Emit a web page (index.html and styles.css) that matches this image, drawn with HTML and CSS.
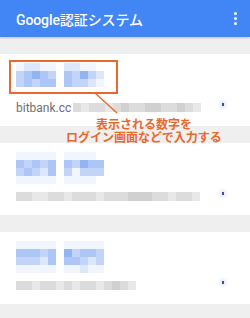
FILE: index.html
```html
<!DOCTYPE html>
<html lang="ja">
<head>
    <meta charset="UTF-8">
    <meta name="viewport" content="width=device-width, initial-scale=1.0">
    <title>Google認証システム</title>
    <link rel="stylesheet" href="styles.css">
</head>
<body>
    <header class="appbar">
        <h1 class="title">Google認証システム</h1>
        <div class="menu"><span></span><span></span><span></span></div>
    </header>

    <main class="list">
        <section class="card">
            <div class="mosaic">
                <i class="s1"></i><i class="s2"></i><i class="s2"></i><i class="s1"></i><i class="s1"></i><i></i><i class="s2"></i><i class="s2"></i><i class="s1"></i><i class="s1"></i><i></i>
                <i class="s3"></i><i class="s4"></i><i class="s5"></i><i class="s4"></i><i class="s3"></i><i></i><i class="s4"></i><i class="s3"></i><i class="s5"></i><i class="s3"></i><i class="s2"></i>
                <i class="s3"></i><i class="s4"></i><i class="s3"></i><i class="s4"></i><i class="s4"></i><i></i><i class="s4"></i><i class="s3"></i><i class="s3"></i><i class="s2"></i><i class="s1"></i>
            </div>
            <div class="meta">
                <span class="label">bitbank.cc</span>
                <div class="bar">
                    <i class="g2"></i><i class="g1"></i><i class="g2"></i><i class="g2"></i><i class="g1"></i><i class="g2"></i><i class="g3"></i><i class="g2"></i><i class="g2"></i><i class="g3"></i><i class="g3"></i><i class="g2"></i><i class="g2"></i><i class="g3"></i><i class="g2"></i><i class="g1"></i>
                </div>
                <span class="tick"></span>
            </div>
        </section>

        <section class="card">
            <div class="mosaic">
                <i class="s1"></i><i class="s1"></i><i class="s1"></i><i class="s1"></i><i class="s1"></i><i></i><i class="s1"></i><i class="s1"></i><i class="s1"></i><i class="s1"></i><i></i>
                <i class="s4"></i><i class="s3"></i><i class="s4"></i><i class="s3"></i><i class="s4"></i><i></i><i class="s4"></i><i class="s3"></i><i class="s5"></i><i class="s4"></i><i class="s4"></i>
                <i class="s3"></i><i class="s4"></i><i class="s3"></i><i class="s2"></i><i class="s4"></i><i></i><i class="s3"></i><i class="s1"></i><i class="s3"></i><i class="s3"></i><i class="s3"></i>
                <i class="s1"></i><i class="s1"></i><i class="s1"></i><i class="s1"></i><i class="s1"></i><i></i><i class="s1"></i><i class="s1"></i><i class="s1"></i><i class="s1"></i><i></i>
            </div>
            <div class="meta">
                <div class="bar">
                    <i class="g2"></i><i class="g2"></i><i class="g1"></i><i class="g1"></i><i class="g2"></i><i class="g2"></i><i class="g1"></i><i class="g2"></i><i class="g2"></i><i class="g2"></i><i class="g1"></i><i class="g2"></i><i class="g2"></i><i class="g2"></i><i class="g3"></i><i class="g3"></i><i class="g3"></i><i class="g2"></i><i class="g2"></i><i class="g1"></i><i class="g2"></i><i class="g2"></i><i class="g1"></i>
                </div>
                <span class="tick"></span>
            </div>
        </section>

        <section class="card">
            <div class="mosaic">
                <i class="s1"></i><i class="s1"></i><i class="s1"></i><i class="s1"></i><i class="s1"></i><i></i><i class="s1"></i><i class="s1"></i><i class="s1"></i><i class="s1"></i><i class="s1"></i>
                <i class="s4"></i><i class="s4"></i><i class="s4"></i><i class="s3"></i><i class="s4"></i><i></i><i class="s5"></i><i class="s3"></i><i class="s4"></i><i class="s4"></i><i class="s3"></i>
                <i class="s3"></i><i class="s3"></i><i class="s3"></i><i class="s2"></i><i class="s4"></i><i></i><i class="s4"></i><i class="s4"></i><i class="s3"></i><i class="s2"></i><i class="s3"></i>
                <i class="s1"></i><i class="s1"></i><i class="s1"></i><i class="s1"></i><i class="s1"></i><i></i><i class="s1"></i><i class="s1"></i><i class="s2"></i><i class="s1"></i><i class="s1"></i>
            </div>
            <div class="meta">
                <div class="bar">
                    <i class="g2"></i><i class="g2"></i><i class="g1"></i><i class="g2"></i><i class="g2"></i><i class="g1"></i><i class="g2"></i><i class="g1"></i><i class="g2"></i><i class="g2"></i><i class="g1"></i><i class="g2"></i><i class="g3"></i><i class="g2"></i><i class="g1"></i>
                </div>
                <span class="tick"></span>
            </div>
        </section>
    </main>

    <!-- annotation drawn on top of the screenshot -->
    <div class="callout-box"></div>
    <svg class="callout-line" width="250" height="318" viewBox="0 0 250 318">
        <line x1="95" y1="93" x2="117" y2="113" stroke="#e8692c" stroke-width="1.4"/>
    </svg>
    <p class="callout-text">表示される数字を<br>ログイン画面などで入力する</p>
</body>
</html>
```

FILE: styles.css
```css
body {
    margin: 0;
    position: relative;
    width: 250px;
    height: 318px;
    overflow: hidden;
    background-color: #efefef;
    font-family: Roboto, "Noto Sans CJK JP", sans-serif;
}

.appbar {
    display: flex;
    align-items: center;
    justify-content: space-between;
    height: 37px;
    padding: 0 13px 0 16px;
    box-sizing: border-box;
    background-color: #4285f4;
    box-shadow: 0 1px 2px rgba(0, 0, 0, 0.18);
    color: white;
}

.title {
    margin: 0;
    font-size: 14px;
    font-weight: 500;
    letter-spacing: -0.1px;
}

.menu {
    display: flex;
    flex-direction: column;
    gap: 2px;
}

.menu span {
    width: 3px;
    height: 3px;
    border-radius: 50%;
    background-color: white;
}

.list {
    display: flex;
    flex-direction: column;
    gap: 17px;
    padding-top: 17px;
}

.card {
    height: 72px;
    box-sizing: border-box;
    padding: 9px 0 0 16px;
    background-color: white;
}

.mosaic {
    display: grid;
    grid-template-columns: repeat(11, 8px);
    grid-auto-rows: 8px;
    height: 32px;
}

.mosaic i { background-color: white; }
.mosaic .s1 { background-color: #f1f5fe; }
.mosaic .s2 { background-color: #dce7fb; }
.mosaic .s3 { background-color: #c2d5f8; }
.mosaic .s4 { background-color: #adc6f5; }
.mosaic .s5 { background-color: #93b4f2; }

.meta {
    display: flex;
    align-items: flex-start;
    margin-top: 8px;
    height: 10px;
}

.label {
    margin-right: 2px;
    font-size: 12px;
    line-height: 10px;
    color: #6f6f6f;
}

.bar {
    display: flex;
    height: 9px;
}

.bar i {
    width: 8px;
    height: 9px;
}

.bar .g1 { background-color: #e8e8e8; }
.bar .g2 { background-color: #dcdcdc; }
.bar .g3 { background-color: #d0d0d0; }

.tick {
    width: 2px;
    height: 3px;
    margin: 0 26px 0 auto;
    background-color: #3b4f9a;
    box-shadow: 0 0 3px 2px rgba(200, 215, 250, 0.5);
}

.callout-box {
    position: absolute;
    left: 9px;
    top: 60px;
    width: 109px;
    height: 34px;
    box-sizing: border-box;
    border: 2px solid #e8692c;
}

.callout-line {
    position: absolute;
    left: 0;
    top: 0;
}

.callout-text {
    position: absolute;
    left: 63px;
    top: 117px;
    width: 162px;
    margin: 0;
    font-family: "Noto Sans CJK JP", sans-serif;
    font-size: 12px;
    font-weight: bold;
    line-height: 13px;
    text-align: center;
    color: #e8692c;
}
```
